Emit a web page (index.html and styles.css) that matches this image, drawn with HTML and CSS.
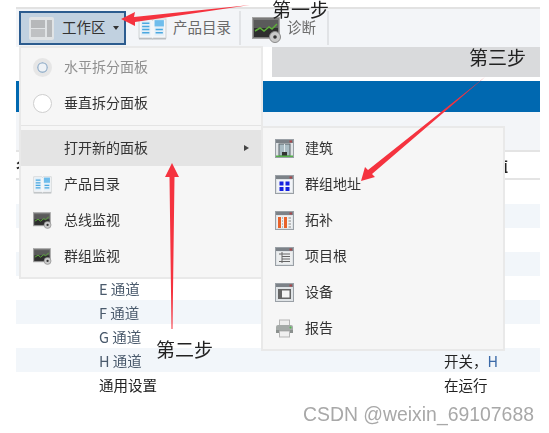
FILE: index.html
```html
<!DOCTYPE html>
<html>

<head>
	<meta charset="utf-8">
	<title>工作区</title>
	<link rel="stylesheet" href="styles.css">
</head>

<body>
	<svg class='defs' width='0' height='0'>
		<symbol id='i-book' viewBox='0 0 28 22' preserveAspectRatio='none'>
			<path d='M1 2h12l1 1 1-1h12v18H15l-1 1-1-1H1z' fill='#f4f6f8' stroke='#cfd3d6'/>
			<path d='M3 3h9v15H3zM16 3h9v15h-9z' fill='#e2eff8'/>
			<path d='M16 3h9v6h-9z' fill='#6fbdec'/>
			<path d='M4 6h7M4 9h7M4 12h7M4 15h7M17 12h7M17 15h7' stroke='#4aa8e0' stroke-width='1.4'/>
			<path d='M1 20h12l1 1 1-1h12v1.500H1z' fill='#b9bdc0'/>
		</symbol>
		<symbol id='i-monitor' viewBox='0 0 30 26'>
			<rect x='0.500' y='0.500' width='27' height='21' fill='#7a7a7a' stroke='#a5a5a5'/>
			<rect x='2' y='3' width='24' height='8' fill='#5a5a5a'/>
			<rect x='2' y='11' width='24' height='9' fill='#2e2e2e'/>
			<path d='M3 14l5-3 4 3 5-4 3 2 5-5' fill='none' stroke='#5fae3c' stroke-width='1.500'/>
			<circle cx='23' cy='20' r='5.500' fill='#c9c9c9' stroke='#8a8a8a'/>
			<circle cx='23' cy='20' r='1.800' fill='#333'/>
		</symbol>
		<symbol id='i-win' viewBox='0 0 19 19'>
			<rect x='0.500' y='0.500' width='18' height='18' fill='#dfe3e6' stroke='#9aa0a6'/>
			<rect x='1' y='1' width='17' height='3' fill='#7c8288'/>
			<rect x='14.500' y='1.500' width='2.500' height='2' fill='#a8484c'/>
		</symbol>
	</svg>

	<div class='app'>
		<div class='toolbar'>
			<div class='tool tool--active'>
				<svg class='tool__layout' viewBox='0 0 25 23'>
					<rect width='25' height='23' rx='2' fill='#e0e3e5'/>
					<rect x='2' y='3' width='14' height='8' fill='#b6b8ba'/>
					<rect x='2' y='12' width='14' height='8' fill='#bfc1c3'/>
					<rect x='18' y='3' width='5' height='17' fill='#b6b8ba'/>
				</svg>
				<span class='tool__label tool__label--dark'>工作区</span>
				<span class='caret'></span>
			</div>
			<div class='tool tool--catalog'>
				<svg class='tool__icon'><use href='#i-book'/></svg>
				<span class='tool__label'>产品目录</span>
			</div>
			<div class='tool tool--diag'>
				<svg class='tool__icon tool__icon--big'><use href='#i-monitor'/></svg>
				<span class='tool__label'>诊断</span>
			</div>
		</div>

		<div class='tabs'>
			<div class='tabs__active'></div>
			<div class='tabs__rest'></div>
		</div>
		<div class='banner'></div>
		<div class='filter'></div>

		<div class='thead'>
			<span>名</span>
			<span>值</span>
		</div>
		<div class='row'></div>
		<div class='row row--alt'></div>
		<div class='row'></div>
		<div class='row row--alt'></div>
		<div class='row'><span class='row__name'>E 通道</span></div>
		<div class='row row--alt'><span class='row__name'>F 通道</span></div>
		<div class='row'><span class='row__name'>G 通道</span></div>
		<div class='row row--alt'><span class='row__name'>H 通道</span><span class='row__value'>开关，<i>H</i></span></div>
		<div class='row'><span class='row__name row__name--dark'>通用设置</span><span class='row__value'>在运行</span></div>
	</div>

	<!-- workspace dropdown -->
	<div class='menu menu--main'>
		<div class='item item--disabled'>
			<span class='radio radio--on'></span>
			<span class='item__text'>水平拆分面板</span>
		</div>
		<div class='item'>
			<span class='radio'></span>
			<span class='item__text'>垂直拆分面板</span>
		</div>
		<div class='menu__sep'></div>
		<div class='item item--hover'>
			<span class='item__slot'></span>
			<span class='item__text'>打开新的面板</span>
			<span class='item__more'></span>
		</div>
		<div class='item'>
			<svg class='item__icon'><use href='#i-book'/></svg>
			<span class='item__text'>产品目录</span>
		</div>
		<div class='item'>
			<svg class='item__icon'><use href='#i-monitor'/></svg>
			<span class='item__text'>总线监视</span>
		</div>
		<div class='item'>
			<svg class='item__icon'><use href='#i-monitor'/></svg>
			<span class='item__text'>群组监视</span>
		</div>
	</div>

	<div class='menu menu--sub'>
		<div class='item'>
			<svg class='item__icon' viewBox='0 0 19 19'>
				<use href='#i-win'/>
				<rect x='4' y='5' width='11' height='12' fill='#a9bcc4' stroke='#5c6469'/>
				<path d='M9.500 5v8' stroke='#dfe7ea'/>
				<rect x='7' y='13' width='5' height='4' fill='#333'/>
				<rect x='1' y='16.500' width='17' height='1.500' fill='#55b04a'/>
			</svg>
			<span class='item__text'>建筑</span>
		</div>
		<div class='item'>
			<svg class='item__icon' viewBox='0 0 19 19'>
				<use href='#i-win'/>
				<rect x='2' y='5' width='15' height='12' fill='#f2f4f8'/>
				<path d='M4.500 6.500h4v4h-4zM10.500 6.500h4v4h-4zM4.500 12h4v4h-4zM10.500 12h4v4h-4z' fill='#1420e0'/>
			</svg>
			<span class='item__text'>群组地址</span>
		</div>
		<div class='item'>
			<svg class='item__icon' viewBox='0 0 19 19'>
				<use href='#i-win'/>
				<rect x='2' y='5' width='15' height='12' fill='#eef0f2'/>
				<path d='M3 6h3v11H3zM9 6h3v11H9z' fill='#e8622a'/>
				<path d='M7 7h1M7 10h1M7 13h1M7 16h1M13.500 7h2.500M13.500 10h2.500M13.500 13h2.500M13.500 16h2.500' stroke='#888'/>
			</svg>
			<span class='item__text'>拓补</span>
		</div>
		<div class='item'>
			<svg class='item__icon' viewBox='0 0 19 19'>
				<use href='#i-win'/>
				<rect x='2' y='5' width='15' height='12' fill='#eceeef'/>
				<path d='M4 7h11M7 9.500h8M7 12h8M4 14.500h11M7 5v11' stroke='#666'/>
			</svg>
			<span class='item__text'>项目根</span>
		</div>
		<div class='item'>
			<svg class='item__icon' viewBox='0 0 19 19'>
				<use href='#i-win'/>
				<rect x='3' y='6' width='13' height='10' fill='#666'/>
				<rect x='7' y='7.500' width='7.500' height='7' fill='#f5f5f5'/>
			</svg>
			<span class='item__text'>设备</span>
		</div>
		<div class='item'>
			<svg class='item__icon' viewBox='0 0 19 19'>
				<rect x='4.500' y='1' width='10' height='6' fill='#eee' stroke='#b5b5b5'/>
				<path d='M1 8q0-2 2-2h13q2 0 2 2v6H1z' fill='#a5aaa8'/>
				<rect x='1' y='11' width='17' height='3' fill='#8b908e'/>
				<rect x='4.500' y='12' width='10' height='6' fill='#f0f0f0' stroke='#b5b5b5'/>
				<circle cx='15.500' cy='8.500' r='1' fill='#4fc04a'/>
			</svg>
			<span class='item__text'>报告</span>
		</div>
	</div>

	<!-- annotations on top of the screenshot -->
	<svg class='arrows' viewBox='0 0 549 433'>
		<path d='M121 19l14-7-1 5 116-12-115 17 0 4z' fill='#f5333f'/>
		<path d='M172 163l7 14h-4.500l-2 152h-1l-2-152H165z' fill='#f5333f'/>
		<path d='M361 181l4-14 3 3 117-93-113 97 3 3z' fill='#f5333f'/>
	</svg>
	<span class='note note--one'>第一步</span>
	<span class='note note--two'>第二步</span>
	<span class='note note--three'>第三步</span>
	<span class='mark'>CSDN @weixin_69107688</span>
</body>

</html>
```

FILE: styles.css
```css
/* page */

* {
	box-sizing: border-box;
}

html,
body {
	margin: 0;
	padding: 0;
	background: #fff;
	font-family: 'Noto Sans CJK SC', 'Liberation Sans', sans-serif;
	font-size: 14px;
	color: #333;
}

body {
	position: relative;
	width: 549px;
	height: 433px;
	overflow: hidden;
}

.defs {
	position: absolute;
}

.app {
	width: 524px;
	margin-left: 16px;
	padding-top: 7px;
	filter: blur(0.4px);
}

/* toolbar */

.toolbar {
	display: flex;
	height: 40px;
	padding: 2px 0 2px 3px;
	border-top: 2px solid #e2e2e2;
	background: #f3f5f8;
}

.tool {
	display: flex;
	align-items: center;
	height: 34px;
	border-right: 2px solid #e1e3e6;
}

.tool--active {
	width: 107px;
	padding-left: 8px;
	margin-right: 2px;
	border: 2px solid #2c5c8f;
	background: #c1d1e0;
}

.tool--catalog {
	width: 113px;
	padding-left: 10px;
}

.tool--diag {
	width: 88px;
	padding-left: 11px;
}

.tool__layout {
	width: 25px;
	height: 23px;
	margin-right: 8px;
}

.tool__icon {
	width: 29px;
	height: 23px;
	margin-right: 6px;
}

.tool__icon--big {
	width: 30px;
	height: 26px;
	margin-top: 3px;
	margin-right: 5px;
}

.tool__label {
	margin-bottom: 2px;
	font-size: 14.500px;
	line-height: 16px;
	color: #6a6a6a;
}

.tool__label--dark {
	color: #333;
}

.caret {
	width: 0;
	height: 0;
	margin-left: 7px;
	border: 3px solid transparent;
	border-top: 4px solid #333;
	border-bottom: 0;
}

/* bands */

.tabs {
	display: flex;
	height: 30px;
}

.tabs__active {
	width: 256px;
}

.tabs__rest {
	flex: 1;
	background: #d9dadc;
}

.banner {
	height: 31px;
	margin-top: 4px;
	background: #0068b0;
}

.filter {
	height: 38px;
	background: #f3f5f8;
}

/* table */

.thead {
	display: flex;
	justify-content: space-between;
	align-items: center;
	height: 30px;
	padding-right: 32px;
	border-top: 2px solid #e4e4e4;
	border-bottom: 2px solid #e4e4e4;
	font-weight: 700;
	color: #222;
}

.row {
	display: flex;
	align-items: center;
	height: 24px;
	font-size: 14.500px;
}

.row--alt {
	background: #f2f6fa;
}

.row__name {
	width: 428px;
	padding-left: 83px;
	color: #4a5a6c;
}

.row__name--dark {
	color: #222;
}

.row__value {
	color: #222;
}

.row__value i {
	font-style: normal;
	color: #3b6aa8;
}

/* menus */

.menu {
	position: absolute;
	width: 244px;
	border: 2px solid #e9e9e9;
	background: #f6f6f6;
	filter: blur(0.4px);
}

.menu--main {
	left: 19px;
	top: 46px;
	height: 233px;
	padding-top: 1px;
}

.menu--sub {
	left: 261px;
	top: 126px;
	height: 225px;
	padding-top: 2px;
}

.item {
	display: flex;
	align-items: center;
	height: 36px;
	padding-left: 12px;
	color: #333;
}

.item--disabled {
	color: #8f8f8f;
}

.item--hover {
	background: #e4e4e4;
}

.item__text {
	margin-bottom: 2px;
}

.item__slot {
	width: 19px;
}

.item__icon,
.radio,
.item__slot {
	flex: none;
	margin-right: 12px;
}

.item__icon {
	width: 19px;
	height: 19px;
}

.menu--sub .item__icon {
	margin-right: 11px;
}

.item__more {
	width: 0;
	height: 0;
	margin-left: 96px;
	border: 3px solid transparent;
	border-left: 5px solid #444;
	border-right: 0;
}

.menu__sep {
	height: 9px;
	border-top: 4px solid transparent;
	border-bottom: 4px solid transparent;
	background: #e4e4e4;
	background-clip: padding-box;
}

.radio {
	width: 19px;
	height: 19px;
	border: 1px solid #cfcfcf;
	border-radius: 50%;
	background: #fff;
}

.radio--on {
	border: 4px solid #e6e6e6;
	background: #eef2f6;
	box-shadow: inset 0 0 0 1.500px #9db5cd;
}

/* annotations */

.arrows {
	position: absolute;
	left: 0;
	top: 0;
	width: 549px;
	height: 433px;
	filter: blur(0.4px);
}

.note {
	position: absolute;
	font-size: 19px;
	line-height: 18px;
	color: #222;
	filter: blur(0.3px);
}

.note--one {
	left: 272px;
	top: 0;
}

.note--two {
	left: 156px;
	top: 340px;
}

.note--three {
	left: 469px;
	top: 48px;
}

.mark {
	position: absolute;
	left: 303px;
	top: 404px;
	font-family: 'Liberation Sans', sans-serif;
	font-size: 19.400px;
	line-height: 20px;
	color: #a8a8a8;
	filter: blur(0.3px);
}
```
